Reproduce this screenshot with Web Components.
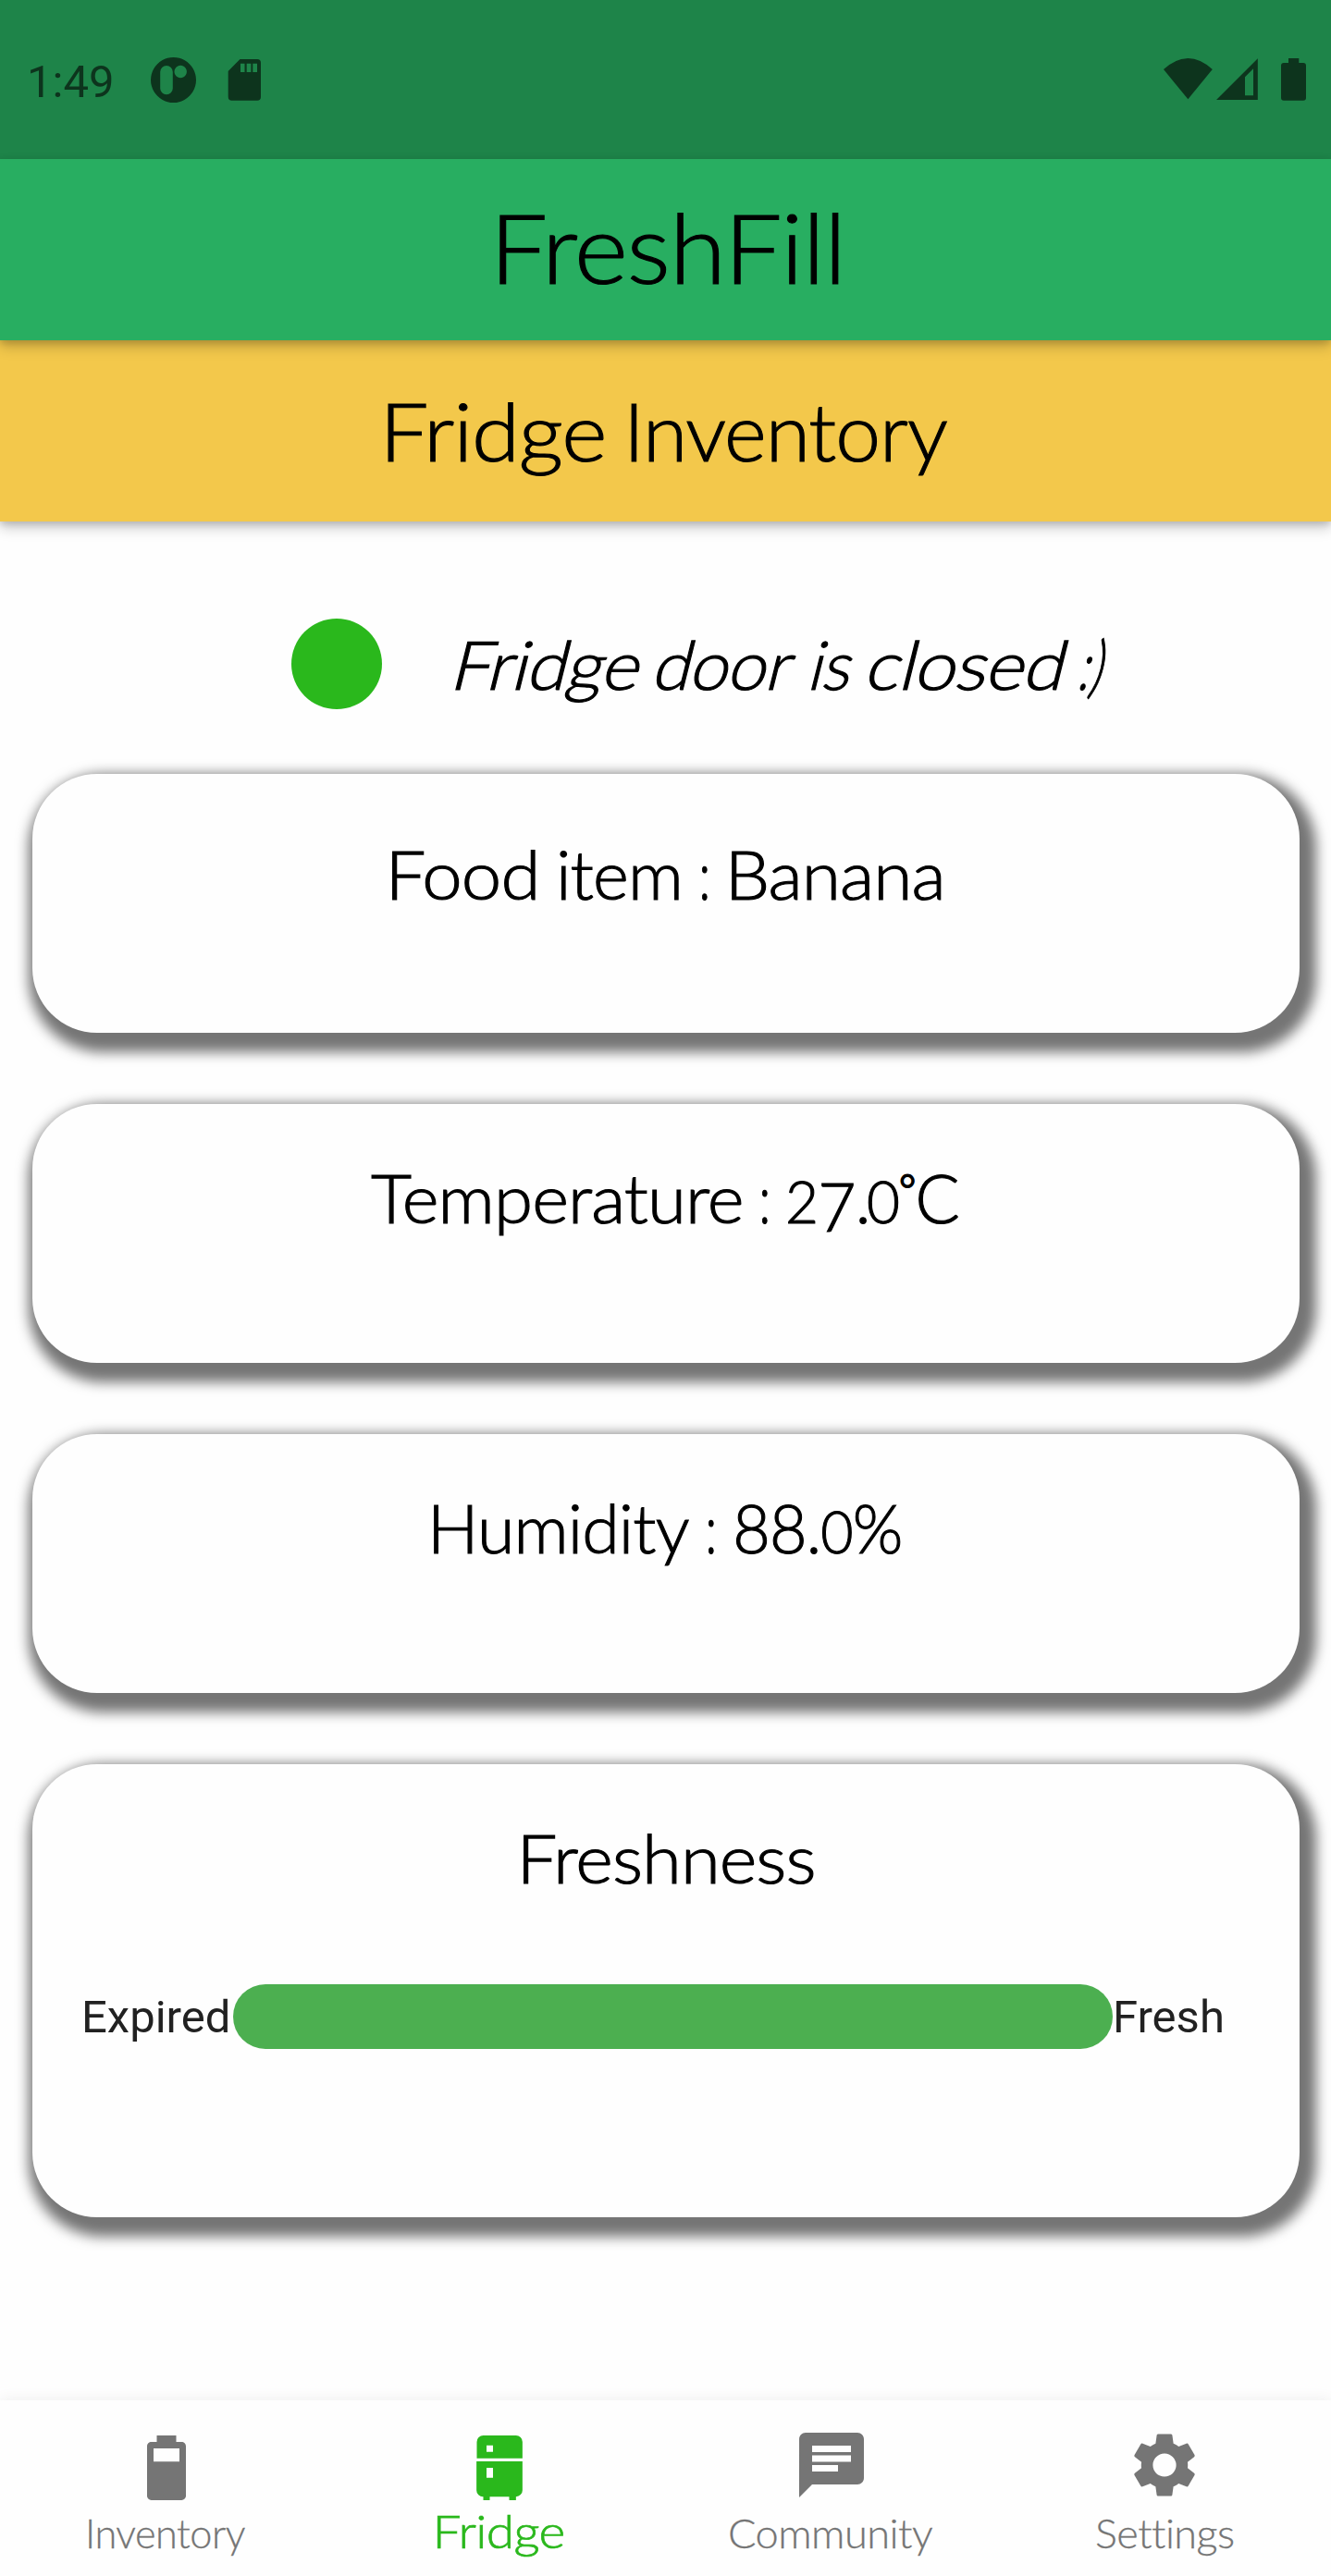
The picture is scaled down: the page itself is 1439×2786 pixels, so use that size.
<!DOCTYPE html>
<html lang="en">
<head>
<meta charset="utf-8">
<title>FreshFill</title>
<style>
html,body{margin:0;padding:0;background:#fefefe}
body{width:1439px;height:2786px;overflow:hidden;font-family:Lato,"Open Sans",sans-serif}
</style>
</head>
<body>
<fresh-app></fresh-app>
<script>
const define = (name, html, setup) => customElements.define(name, class extends HTMLElement {
  connectedCallback() {
    if (this.shadowRoot) return;
    const root = this.attachShadow({ mode: 'open' });
    const t = document.createElement('template');
    t.innerHTML = html;
    root.appendChild(t.content.cloneNode(true));
    if (setup) setup(this, root);
  }
});

/* One line of thin display type, made of fit-word elements */
define('fit-text', `
<style>
:host{display:block;flex:none;font-weight:300;line-height:1;white-space:nowrap}
</style><slot></slot>`, host => {
  host.style.fontSize = host.getAttribute('size') + 'px';
});

/* A word stretched so that its ink has width w, after a gap from the previous word's ink */
define('fit-word', `
<style>
:host{display:inline-block;line-height:1}
span{display:inline-block;letter-spacing:-.012em;transform-origin:0 50%;-webkit-text-stroke:var(--stroke,0) currentColor}
</style><span><slot></slot></span>`, (host, root) => {
  const width = +host.getAttribute('w');
  const text = host.textContent.trim();
  const span = root.querySelector('span');
  const ctx = document.createElement('canvas').getContext('2d');
  const cs = getComputedStyle(host);
  const size = parseFloat(cs.fontSize);
  ctx.font = `${cs.fontWeight} ${size}px ${cs.fontFamily}`;
  const first = ctx.measureText(text[0]), last = ctx.measureText(text[text.length - 1]);
  const left = -first.actualBoundingBoxLeft;
  const right = last.width - last.actualBoundingBoxRight;
  const ink = span.offsetWidth + .012 * size - left - right;
  const scale = width / ink;
  span.style.transform = `translateX(${-left * scale}px) scaleX(${scale})`;
  host.style.width = width + 'px';
  if (host.hasAttribute('gap'))
    host.style.marginLeft = +host.getAttribute('gap') - ctx.measureText(' ').width + 'px';
});

define('status-bar', `
<style>
:host{display:flex;box-sizing:border-box;height:172px;background:#1e8449;color:#0d341d;padding:62px 27px 0 29px;justify-content:space-between;align-items:flex-start}
div{display:flex}
span{font:400 49px/49px Roboto,sans-serif;margin-top:2px;width:134px}
svg{display:block;fill:currentColor}
</style>
<div><span>1:49</span>
<svg width="122" height="50" viewBox="163 62 122 50">
<path fill-rule="evenodd" d="M187.500 62a24.500 24.500 0 1 0 .01 0zM180 71a6.800 6.800 0 0 1 6.800 6.800v17.600a6.800 6.800 0 0 1-13.600 0V77.800A6.800 6.800 0 0 1 180 71zM195.200 70.800a6.700 6.700 0 1 1-.01 0z"/>
<path fill-rule="evenodd" d="M259.500 64H278q4 0 4 4v36.700q0 4-4 4h-27.300q-4 0-4-4V77zM260 68.700V78h4.500v-9.300zM266.700 68.700V78h4.700v-9.300zM273.300 68.700V78h4.700v-9.300z"/>
</svg></div>
<svg width="155" height="50" viewBox="1257 62 155 50">
<path d="M1258 75Q1284.400 51 1310.800 75L1284.400 107.300z"/>
<path fill-rule="evenodd" d="M1359.800 63.300V108H1315zM1355 74.300l-9 9v20h9z"/>
<path d="M1393 63h11.300v5h4.700q3 0 3 3v34.700q0 3-3 3h-21q-3 0-3-3V71q0-3 3-3h5z"/>
</svg>`);

define('title-bar', `
<style>
:host{display:flex;box-sizing:border-box;height:196px;justify-content:center;background:var(--bar);position:relative;box-shadow:0 7px 14px rgba(0,0,0,.2),0 3px 7px rgba(0,0,0,.14);color:#000}
</style><slot></slot>`);

define('door-status', `
<style>
:host{display:flex;height:98px;align-items:center;padding-left:315px;margin-top:105px}
i{width:98px;height:98px;border-radius:50%;background:#2ab81c;flex:none;margin-right:86px}
::slotted(*){transform:skewX(-14deg)}
</style><i></i><slot></slot>`);

define('info-card', `
<style>
:host{display:flex;flex-direction:column;align-items:center;box-sizing:border-box;height:280px;padding-top:65px;border-radius:70px;background:#fefefe;box-shadow:7px 10.5px 14px 10.5px #757575;color:#000}
:host([tall]){height:490px}
</style><slot></slot>`);

define('freshness-meter', `
<style>
:host{display:flex;align-items:center;align-self:stretch;margin-top:100px;padding-left:53px;height:70px;font:400 49px/1 Roboto,sans-serif;color:#212121}
span{white-space:nowrap}
.a{width:164px}
i{width:951px;height:70px;border-radius:35px;background:#4caf50;flex:none}
</style><span class="a">Expired</span><i></i><span>Fresh</span>`);

define('nav-item', `
<style>
:host{display:flex;flex:1;flex-direction:column;align-items:center;justify-content:space-between;color:#757575;--stroke:.3px}
:host([active]){color:#2ab81c;--stroke:.7px}
svg{display:block;width:84px;height:84px;fill:currentColor;margin-top:var(--drop,0)}
</style><svg viewBox="0 0 24 24"><path fill-rule="evenodd"/></svg><slot></slot>`, (host, root) => {
  const icons = {
    battery: 'M9 2h6v2h1.670C17.400 4 18 4.600 18 5.330v15.340c0 .73-.6 1.330-1.330 1.330H7.330C6.600 22 6 21.400 6 20.670V5.330C6 4.600 6.600 4 7.330 4H9zM8 6v4.100h8V6z',
    fridge: 'M5 9.100V4a2 2 0 0 1 2-2h10.100a2 2 0 0 1 2 2v5.100zM8 5.100v2h2v-2zM4.900 10H19.100v8.900a2 2 0 0 1-2 2V22H15v-1.100H9V22H7v-1.100a2 2 0 0 1-2.100-2zM8 12v3.100h2V12z',
    chat: 'M20 2H4c-1.100 0-1.990.9-1.990 2L2 22l4-4h14c1.100 0 2-.9 2-2V4c0-1.100-.9-2-2-2zM6 9h12v2H6V9zm8 5H6v-2h8v2zm4-6H6V6h12v2z',
    gear: 'M19.140 12.940c.04-.3.06-.61.06-.94 0-.32-.02-.64-.07-.94l2.030-1.580c.18-.14.23-.41.12-.61l-1.920-3.320c-.12-.22-.37-.29-.59-.22l-2.390.96c-.5-.38-1.030-.7-1.620-.94l-.36-2.540c-.04-.24-.24-.41-.48-.41h-3.840c-.24 0-.43.17-.47.41l-.36 2.540c-.59.24-1.130.57-1.620.94l-2.390-.96c-.22-.08-.47 0-.59.22L2.740 8.870c-.12.21-.08.47.12.61l2.030 1.580c-.05.3-.09.63-.09.94s.02.64.07.94l-2.030 1.580c-.18.14-.23.41-.12.61l1.920 3.320c.12.22.37.29.59.22l2.390-.96c.5.38 1.030.7 1.620.94l.36 2.540c.05.24.24.41.48.41h3.840c.24 0 .44-.17.47-.41l.36-2.540c.59-.24 1.130-.56 1.620-.94l2.390.96c.22.08.47 0 .59-.22l1.920-3.320c.12-.22.07-.47-.12-.61l-2.010-1.580zM12 15.600c-1.980 0-3.600-1.620-3.600-3.600s1.620-3.600 3.600-3.600 3.600 1.620 3.600 3.600-1.620 3.600-3.600 3.600z'
  };
  root.querySelector('path').setAttribute('d', icons[host.getAttribute('icon')]);
});

define('bottom-nav', `
<style>
:host{display:flex;box-sizing:border-box;height:190px;padding:28px 0 25px;background:#fefefe;box-shadow:0 -2px 14px rgba(0,0,0,.06)}
</style><slot></slot>`);

define('fresh-app', `
<style>
:host{display:flex;flex-direction:column;width:1439px;height:2786px;--stroke:1.1px}
.green{--bar:#28ae61;z-index:2;padding-top:43px}
.yellow{--bar:#f3c84b;z-index:1;padding-top:55px}
main{flex:1;display:flex;flex-direction:column}
section{display:flex;flex-direction:column;gap:77px;padding:70px 34px 0 35px}
.food{padding-top:72px}
.low{font-size:.87em;line-height:0}
.seven{vertical-align:-.12em;line-height:0}
.dot{letter-spacing:-.06em}
.deg{font-size:.62em;vertical-align:.44em;line-height:0;-webkit-text-stroke-width:2px}
</style>
<status-bar></status-bar>
<title-bar class="green"><fit-text size="104" style="margin-left:6px"><fit-word w="366">FreshFill</fit-word></fit-text></title-bar>
<title-bar class="yellow"><fit-text size="86.500" style="margin-left:4px"><fit-word w="232">Fridge</fit-word> <fit-word gap="30.400" w="340">Inventory</fit-word></fit-text></title-bar>
<main>
<door-status><fit-text size="73"><fit-word w="193.600">Fridge</fit-word> <fit-word gap="20.700" w="145">door</fit-word> <fit-word gap="23.200" w="39.500">is</fit-word> <fit-word gap="22" w="206">closed</fit-word> <fit-word gap="25" w="20">:)</fit-word></fit-text></door-status>
<section>
<info-card class="food"><fit-text size="73" style="margin-left:2px"><fit-word w="154.400">Food</fit-word> <fit-word gap="26.500" w="128.400">item</fit-word> <fit-word gap="25" w="6">:</fit-word> <fit-word gap="26.700" w="226.400">Banana</fit-word></fit-text></info-card>
<info-card><fit-text size="73" style="margin-left:-3px"><fit-word w="399.800">Temperature</fit-word> <fit-word gap="22" w="6">:</fit-word> <fit-word gap="22.400" w="182"><span class="low">2</span><span class="seven">7</span><span class="dot">.</span><span class="low">0</span><span class="deg">°</span>C</fit-word></fit-text></info-card>
<info-card><fit-text size="73" style="margin-left:2px"><fit-word w="276.200">Humidity</fit-word> <fit-word gap="21" w="6">:</fit-word> <fit-word gap="23.300" w="177.400">88.<span class="low">0</span>%</fit-word></fit-text></info-card>
<info-card tall><fit-text size="73" style="margin-left:5px"><fit-word w="313">Freshness</fit-word></fit-text><freshness-meter></freshness-meter></info-card>
</section>
</main>
<bottom-nav>
<nav-item icon="battery" style="--drop:3px"><fit-text size="43.500" style="margin-left:3px"><fit-word w="170">Inventory</fit-word></fit-text></nav-item>
<nav-item icon="fridge" active style="--drop:3px"><fit-text size="50" style="margin-left:3px;margin-bottom:-1px"><fit-word w="136">Fridge</fit-word></fit-text></nav-item>
<nav-item icon="chat"><fit-text size="43.500"><fit-word w="220">Community</fit-word></fit-text></nav-item>
<nav-item icon="gear"><fit-text size="43.500"><fit-word w="149">Settings</fit-word></fit-text></nav-item>
</bottom-nav>`);
</script>
</body>
</html>
